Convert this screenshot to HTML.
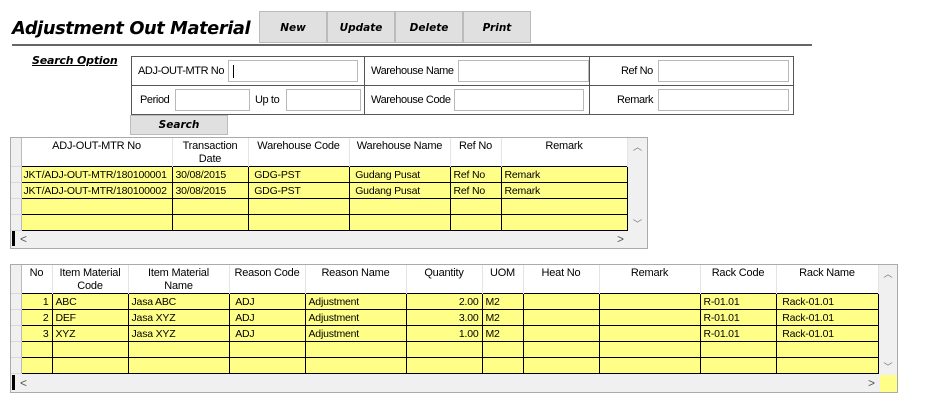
<!DOCTYPE html>
<html><head><meta charset="utf-8"><style>
*{box-sizing:border-box;margin:0;padding:0}
body{width:950px;height:400px;background:#fff;position:relative;overflow:hidden;font-family:"Liberation Sans",Tahoma,sans-serif;font-size:11px;color:#000}
.a{position:absolute}
.title{left:12px;top:18px;font-family:"DejaVu Sans",sans-serif;font-weight:bold;font-style:italic;font-size:17.8px;letter-spacing:-0.4px}
.btn{top:11px;height:32px;width:68px;background:#e0e0e0;border:1px solid #bbb;font-family:"DejaVu Sans",sans-serif;font-weight:bold;font-style:italic;font-size:10.5px;text-align:center;line-height:32px}
.inp{background:#fff;border:1px solid #b8b8b8;height:22px}
.lbl{font-size:11px;line-height:14px;letter-spacing:-0.4px}
table{border-collapse:collapse;table-layout:fixed;position:absolute}
td,th{overflow:hidden;white-space:nowrap;font-weight:normal;font-size:10.5px;letter-spacing:-0.2px;padding:0 3px}
th{background:#fff;border-right:1px solid #e4e4e4;vertical-align:top;text-align:center;line-height:13px;padding-top:2px;white-space:normal;font-size:11px}
td{background:#ffff88;border:1px solid #000;height:16px;line-height:14px}
th.rh,td.rh{background:#f0f0f0;border:none;border-right:1px solid #bbb;border-bottom:1px solid #d8d8d8}
.grid{background:#f0f0f0;border:1px solid #aaa}
</style></head><body>
<div class="a title">Adjustment Out Material</div>
<div class="a btn" style="left:259px">New</div>
<div class="a btn" style="left:327px">Update</div>
<div class="a btn" style="left:395px">Delete</div>
<div class="a btn" style="left:463px">Print</div>
<div class="a" style="left:12px;top:44px;width:800px;height:2px;background:#666"></div>

<div class="a" style="left:32px;top:54px;font-family:'DejaVu Sans',sans-serif;font-weight:bold;font-style:italic;font-size:11px;letter-spacing:-0.2px;text-decoration:underline">Search Option</div>

<div class="a" style="left:131px;top:56px;width:663px;height:59px;border:1px solid #555"></div>
<div class="a" style="left:131px;top:85px;width:663px;height:1px;background:#555"></div>
<div class="a" style="left:364px;top:56px;width:1px;height:59px;background:#555"></div>
<div class="a" style="left:589px;top:56px;width:1px;height:59px;background:#555"></div>

<div class="a lbl" style="left:138px;top:64px">ADJ-OUT-MTR No</div>
<div class="a inp" style="left:228px;top:60px;width:130px"><div style="position:absolute;left:4px;top:4px;width:1px;height:13px;background:#000"></div></div>
<div class="a lbl" style="left:371px;top:64px">Warehouse Name</div>
<div class="a inp" style="left:458px;top:60px;width:131px"></div>
<div class="a lbl" style="left:621px;top:64px">Ref No</div>
<div class="a inp" style="left:658px;top:60px;width:131px"></div>

<div class="a lbl" style="left:140px;top:93px">Period</div>
<div class="a inp" style="left:175px;top:89px;width:75px"></div>
<div class="a lbl" style="left:255px;top:93px">Up to</div>
<div class="a inp" style="left:286px;top:89px;width:75px"></div>
<div class="a lbl" style="left:371px;top:93px">Warehouse Code</div>
<div class="a inp" style="left:454px;top:89px;width:130px"></div>
<div class="a lbl" style="left:617px;top:93px">Remark</div>
<div class="a inp" style="left:658px;top:89px;width:131px"></div>

<div class="a" style="left:130px;top:115px;width:98px;height:20px;background:#e0e0e0;border:1px solid #bbb;text-align:center;line-height:18px;font-family:'DejaVu Sans',sans-serif;font-weight:bold;font-style:italic;font-size:10.5px">Search</div>

<!-- Grid 1 -->
<div class="a grid" style="left:10px;top:137px;width:638px;height:112px"></div>
<table style="left:11px;top:138px;width:616px">
<colgroup><col style="width:10px"><col style="width:151px"><col style="width:76px"><col style="width:101px"><col style="width:101px"><col style="width:51px"><col style="width:126px"></colgroup>
<tr style="height:28px"><th class="rh"></th><th>ADJ-OUT-MTR No</th><th>Transaction Date</th><th>Warehouse Code</th><th>Warehouse Name</th><th>Ref No</th><th>Remark</th></tr>
<tr><td class="rh"></td><td style="padding-left:2px">JKT/ADJ-OUT-MTR/180100001</td><td>30/08/2015</td><td>&nbsp;GDG-PST</td><td>&nbsp;Gudang Pusat</td><td>Ref No</td><td>Remark</td></tr>
<tr><td class="rh"></td><td style="padding-left:2px">JKT/ADJ-OUT-MTR/180100002</td><td>30/08/2015</td><td>&nbsp;GDG-PST</td><td>&nbsp;Gudang Pusat</td><td>Ref No</td><td>Remark</td></tr>
<tr><td class="rh"></td><td></td><td></td><td></td><td></td><td></td><td></td></tr>
<tr><td class="rh"></td><td></td><td></td><td></td><td></td><td></td><td></td></tr>
</table>
<div class="a" style="left:628px;top:138px;width:19px;height:92px;background:#f0f0f0;color:#777;text-align:center;font-size:9px"><div style="margin-top:2px">︿</div><div style="margin-top:64px">﹀</div></div>
<div class="a" style="left:12px;top:231px;width:3px;height:15px;background:#000"></div>
<div class="a" style="left:20px;top:232px;color:#555;font-size:12px">&lt;</div>
<div class="a" style="left:617px;top:232px;color:#555;font-size:12px">&gt;</div>

<!-- Grid 2 -->
<div class="a grid" style="left:10px;top:264px;width:888px;height:129px"></div>
<table style="left:11px;top:265px;width:867px">
<colgroup><col style="width:10px"><col style="width:31px"><col style="width:76px"><col style="width:101px"><col style="width:76px"><col style="width:101px"><col style="width:76px"><col style="width:41px"><col style="width:76px"><col style="width:101px"><col style="width:76px"><col style="width:102px"></colgroup>
<tr style="height:28px"><th class="rh"></th><th>No</th><th>Item Material Code</th><th style="padding:2px 12px 0">Item Material Name</th><th>Reason Code</th><th>Reason Name</th><th>Quantity</th><th>UOM</th><th>Heat No</th><th>Remark</th><th>Rack Code</th><th>Rack Name</th></tr>
<tr><td class="rh"></td><td style="text-align:right">1</td><td>ABC</td><td>Jasa ABC</td><td>&nbsp;ADJ</td><td>Adjustment</td><td style="text-align:right">2.00</td><td>M2</td><td></td><td></td><td>R-01.01</td><td>&nbsp;Rack-01.01</td></tr>
<tr><td class="rh"></td><td style="text-align:right">2</td><td>DEF</td><td>Jasa XYZ</td><td>&nbsp;ADJ</td><td>Adjustment</td><td style="text-align:right">3.00</td><td>M2</td><td></td><td></td><td>R-01.01</td><td>&nbsp;Rack-01.01</td></tr>
<tr><td class="rh"></td><td style="text-align:right">3</td><td>XYZ</td><td>Jasa XYZ</td><td>&nbsp;ADJ</td><td>Adjustment</td><td style="text-align:right">1.00</td><td>M2</td><td></td><td></td><td>R-01.01</td><td>&nbsp;Rack-01.01</td></tr>
<tr><td class="rh"></td><td></td><td></td><td></td><td></td><td></td><td></td><td></td><td></td><td></td><td></td><td></td></tr>
<tr><td class="rh"></td><td></td><td></td><td></td><td></td><td></td><td></td><td></td><td></td><td></td><td></td><td></td></tr>
</table>
<div class="a" style="left:879px;top:265px;width:18px;height:109px;background:#f0f0f0;color:#777;text-align:center;font-size:9px"><div style="margin-top:2px">︿</div><div style="margin-top:80px">﹀</div></div>
<div class="a" style="left:880px;top:375px;width:17px;height:17px;background:#ffff88"></div>
<div class="a" style="left:12px;top:375px;width:3px;height:15px;background:#000"></div>
<div class="a" style="left:20px;top:376px;color:#555;font-size:12px">&lt;</div>
<div class="a" style="left:868px;top:376px;color:#555;font-size:12px">&gt;</div>
</body></html>
